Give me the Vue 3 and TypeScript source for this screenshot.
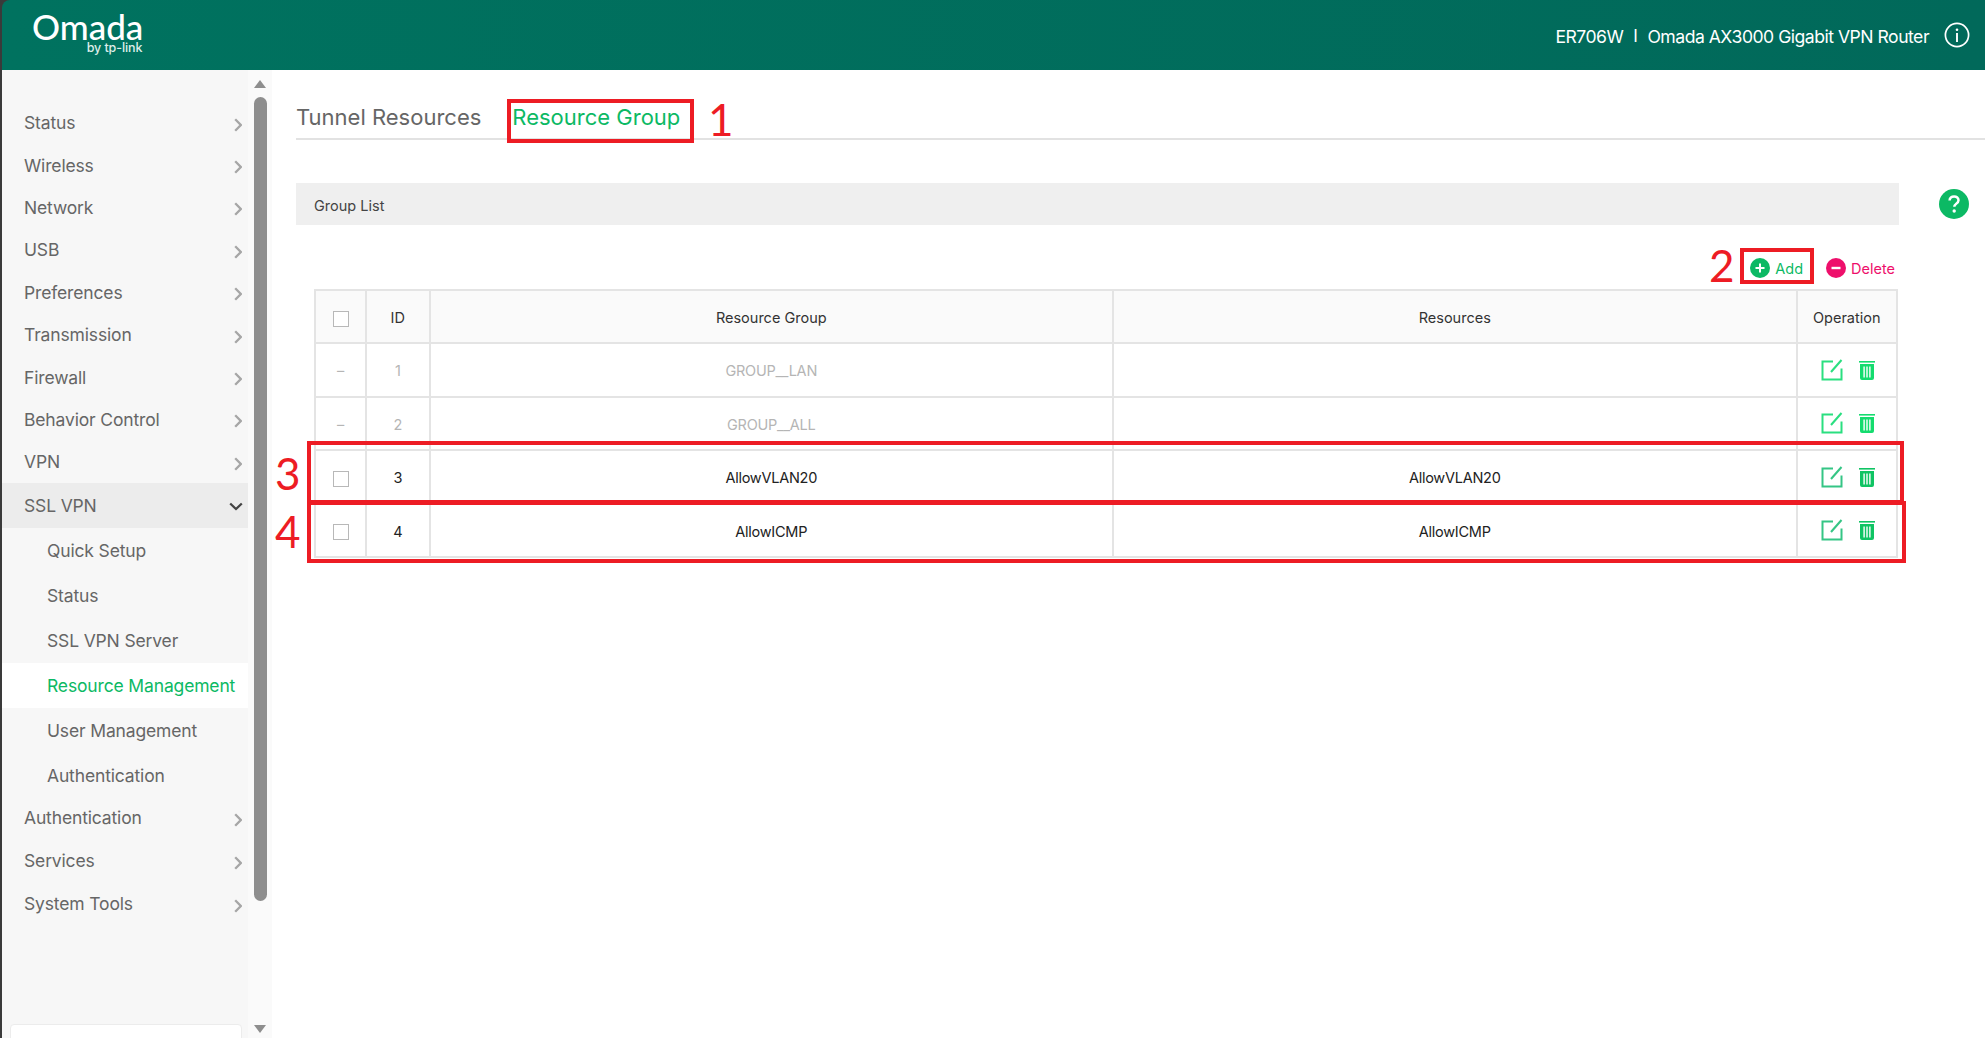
<script setup lang="ts">
interface Row { id: number; group: string; res: string; locked: boolean }
const topItems = ['Status', 'Wireless', 'Network', 'USB', 'Preferences', 'Transmission', 'Firewall', 'Behavior Control', 'VPN']
const subItems = ['Quick Setup', 'Status', 'SSL VPN Server', 'Resource Management', 'User Management', 'Authentication']
const endItems = ['Authentication', 'Services', 'System Tools']
const rows: Row[] = [
  { id: 1, group: 'GROUP__LAN', res: '', locked: true },
  { id: 2, group: 'GROUP__ALL', res: '', locked: true },
  { id: 3, group: 'AllowVLAN20', res: 'AllowVLAN20', locked: false },
  { id: 4, group: 'AllowICMP', res: 'AllowICMP', locked: false },
]
</script>

<template>
  <div class="app">
    <header class="topbar">
      <div class="logo">
        <span class="logo-name">Omada</span>
        <span class="logo-sub">by tp-link</span>
      </div>
      <div class="model">
        <span>ER706W</span><span class="sep">I</span><span>Omada AX3000 Gigabit VPN Router</span>
        <svg class="info" viewBox="0 0 26 26" width="26" height="26">
          <circle cx="13" cy="13" r="11.6" fill="none" stroke="#fff" stroke-width="1.7" />
          <circle cx="13" cy="7.8" r="1.3" fill="#fff" />
          <path d="M13 11v9" stroke="#fff" stroke-width="1.9" fill="none" />
        </svg>
      </div>
    </header>

    <div class="body">
      <aside class="side">
        <div class="menu">
          <div v-for="m in topItems" :key="m" class="item">
            <span>{{ m }}</span>
            <svg class="chev" viewBox="0 0 8 14" width="8" height="14"><path d="M1.2 1.2L6.8 7l-5.6 5.8" fill="none" stroke="#a6a6a6" stroke-width="2.3" /></svg>
          </div>
          <div class="item open">
            <span>SSL VPN</span>
            <svg class="chev-down" viewBox="0 0 14 9" width="14" height="9"><path d="M1.2 1.5L7 7l5.8-5.5" fill="none" stroke="#444" stroke-width="2.3" /></svg>
          </div>
          <div v-for="s in subItems" :key="s" class="sub" :class="{ active: s === 'Resource Management' }">{{ s }}</div>
          <div class="end">
            <div v-for="m in endItems" :key="'e' + m" class="item">
              <span>{{ m }}</span>
              <svg class="chev" viewBox="0 0 8 14" width="8" height="14"><path d="M1.2 1.2L6.8 7l-5.6 5.8" fill="none" stroke="#a6a6a6" stroke-width="2.3" /></svg>
            </div>
          </div>
        </div>
        <div class="side-foot"></div>
      </aside>

      <div class="scroll">
        <span class="tri up"></span>
        <span class="thumb"></span>
        <span class="tri dn"></span>
      </div>

      <main class="main">
        <nav class="tabs">
          <span class="tab">Tunnel Resources</span>
          <span class="tab on">Resource Group</span>
        </nav>

        <div class="bar-row">
          <div class="bar">Group List</div>
          <svg class="help" viewBox="0 0 30 30" width="30" height="30">
            <circle cx="15" cy="15" r="15" fill="#0cb964" />
            <path d="M10.6 11.6c0-2.6 2-4.2 4.5-4.2s4.4 1.5 4.4 3.8c0 3.4-4.2 3.4-4.2 6.6" fill="none" stroke="#fff" stroke-width="2.5" />
            <circle cx="15.2" cy="22" r="1.7" fill="#fff" />
          </svg>
        </div>

        <div class="panel">
          <div class="actions">
            <span class="act add">
              <svg viewBox="0 0 20 20" width="20" height="20"><circle cx="10" cy="10" r="10" fill="#0cb964" /><path d="M10 5.5v9M5.5 10h9" stroke="#fff" stroke-width="2" /></svg>
              <span class="lbl">Add</span>
            </span>
            <span class="act del">
              <svg viewBox="0 0 20 20" width="20" height="20"><circle cx="10" cy="10" r="10" fill="#ee0f6b" /><path d="M5.5 10h9" stroke="#fff" stroke-width="2.4" /></svg>
              <span class="lbl">Delete</span>
            </span>
          </div>

          <table class="grid">
            <colgroup>
              <col class="c1" /><col class="c2" /><col class="c3" /><col class="c3" /><col />
            </colgroup>
            <thead>
              <tr>
                <th><span class="cb"></span></th>
                <th>ID</th>
                <th>Resource Group</th>
                <th>Resources</th>
                <th>Operation</th>
              </tr>
            </thead>
            <tbody>
              <tr v-for="r in rows" :key="r.id" :class="{ locked: r.locked }">
                <td>
                  <span v-if="r.locked">–</span>
                  <span v-else class="cb"></span>
                </td>
                <td>{{ r.id }}</td>
                <td>{{ r.group }}</td>
                <td>{{ r.res }}</td>
                <td>
                  <div class="ops">
                    <svg viewBox="0 0 22 22" width="22" height="22" class="edit">
                      <path d="M12 2.5H1.5v18h19V9.5" fill="none" stroke="currentColor" stroke-width="2" />
                      <path d="M10 13L20.5 1" fill="none" stroke="currentColor" stroke-width="2" />
                    </svg>
                    <svg viewBox="0 0 16 20" width="16" height="20" class="trash">
                      <path d="M0 1h16v1.6H0z" fill="currentColor" />
                      <path fill-rule="evenodd" d="M1 4h14v14a2 2 0 0 1-2 2H3a2 2 0 0 1-2-2zM4.4 6.5v11h1.4v-11zM7.3 6.5v11h1.4v-11zM10.2 6.5v11h1.4v-11z" fill="currentColor" />
                    </svg>
                  </div>
                </td>
              </tr>
            </tbody>
          </table>
        </div>
      </main>
    </div>

    <span class="mark box1"></span>
    <span class="mark box2"></span>
    <span class="mark box3"></span>
    <span class="mark box4"></span>
    <span class="num n1">1</span>
    <span class="num n2">2</span>
    <span class="num n3">3</span>
    <span class="num n4">4</span>
  </div>
</template>

<style>
html, body { margin: 0; padding: 0; background: #fff; }
</style>

<style scoped>
.app {
  position: relative;
  width: 1985px;
  height: 1038px;
  overflow: hidden;
  display: flex;
  flex-direction: column;
  background: #3a3a3a;
  font-family: Inter, "Noto Sans", sans-serif;
  color: #333;
}
.topbar {
  height: 70px;
  flex: none;
  margin-left: 2px;
  border-top-left-radius: 8px;
  background: linear-gradient(90deg, #00725f, #01695a);
  display: flex;
  align-items: center;
  justify-content: space-between;
  color: #fff;
}
.logo { display: flex; flex-direction: column; align-items: flex-end; margin-left: 30px; margin-top: -6px; line-height: 1; }
.logo-name { font-family: Lato, sans-serif; font-size: 35px; font-weight: 500; height: 33px; }
.logo-sub { font-size: 12.5px; font-weight: 500; color: #dfeeea; letter-spacing: -0.1px; margin-right: 1px; }
.model { display: flex; align-items: center; font-size: 17.6px; letter-spacing: -0.5px; margin-right: 15px; padding-top: 2px; }
.sep { margin: 0 10px; font-size: 17px; font-weight: 400; }
.info { margin-left: 15px; margin-top: -2px; }

.body { flex: 1; display: flex; min-height: 0; margin-left: 2px; background: #fff; }
.side { width: 246px; flex: none; background: #f7f7f7; position: relative; }
.menu { padding-top: 31.5px; }
.item {
  height: 42.4px;
  display: flex;
  align-items: center;
  justify-content: space-between;
  padding: 0 6px 0 22px;
  font-size: 17.5px;
  letter-spacing: -0.15px;
  color: #666;
}
.chev { margin-top: 4px; }
.item.open { height: 45px; background: #ececec; padding-right: 5px; }
.chev-down { margin-top: 2px; }
.end { margin-top: -2px; }
.end .item { height: 43px; }
.sub {
  height: 45px;
  display: flex;
  align-items: center;
  padding-left: 45px;
  font-size: 17.5px;
  letter-spacing: -0.15px;
  color: #666;
}
.sub.active { background: #fff; color: #0cb964; }
.side-foot {
  position: absolute;
  left: 8px;
  right: 6px;
  top: 954px;
  height: 40px;
  background: #fff;
  border: 1px solid #ececec;
  border-radius: 4px;
}

.scroll {
  width: 24px;
  flex: none;
  background: #fafafa;
  display: flex;
  flex-direction: column;
  align-items: center;
  padding-top: 10px;
  box-sizing: border-box;
}
.thumb { width: 13px; height: 804px; margin: 9px 0 0; border-radius: 7px; background: #8e8e8e; flex: none; }
.tri { width: 0; height: 0; border-left: 6px solid transparent; border-right: 6px solid transparent; flex: none; }
.tri.up { border-bottom: 8px solid #8e8e8e; }
.tri.dn { border-top: 8px solid #8e8e8e; margin-top: 124px; }

.main { flex: 1; min-width: 0; padding-left: 24px; }
.tabs {
  height: 70px;
  box-sizing: border-box;
  border-bottom: 2px solid #e2e2e2;
  display: flex;
  align-items: flex-end;
  gap: 31px;
  font-size: 22px;
  padding-bottom: 8px;
}
.tab { color: #666; }
.tab.on { color: #0cb964; }

.bar-row { display: flex; align-items: center; margin-top: 43px; gap: 40px; }
.bar {
  width: 1603px;
  height: 42px;
  background: #efefef;
  box-sizing: border-box;
  padding: 2px 0 0 18px;
  display: flex;
  align-items: center;
  font-size: 14.5px;
  color: #444;
}
.help { flex: none; }

.panel { width: 1584px; margin-left: 18px; }
.actions {
  height: 64px;
  display: flex;
  align-items: center;
  justify-content: flex-end;
  gap: 22px;
  font-size: 14.5px;
  padding-top: 21px;
  padding-right: 3px;
  box-sizing: border-box;
}
.act { display: inline-flex; align-items: center; gap: 5px; }
.act.add { color: #0cb964; }
.act.del { color: #ee0f6b; }
.act.add .lbl { margin-right: 1px; }
.lbl { padding-top: 2px; }

.grid { width: 100%; table-layout: fixed; border-collapse: collapse; font-size: 14.5px; }
.c1 { width: 51px; }
.c2 { width: 63.5px; }
.c3 { width: 683.5px; }
.grid th, .grid td { border: 2px solid #e4e4e4; text-align: center; padding: 2px 0 0; height: 49.5px; color: #222; font-weight: 400; }
.grid td { letter-spacing: -0.25px; }
.grid th { background: #fafafa; color: #333; height: 49px; }
.locked td { color: #b5b5b5; }
.cb { display: inline-block; box-sizing: border-box; width: 16px; height: 16px; border: 1.5px solid #b8b8b8; background: #fff; vertical-align: middle; }
.ops { display: flex; align-items: center; justify-content: flex-start; padding-left: 23px; gap: 16px; margin-top: -2px; }
.edit { color: #35c585; }
.trash { color: #0fc463; }
.locked .edit { color: #2adf80; }
.locked .trash { color: #14dc6e; }

.mark { position: absolute; box-sizing: border-box; border: 4px solid #ed1c24; pointer-events: none; }
.box1 { left: 507px; top: 99px; width: 187px; height: 44px; }
.box2 { left: 1740px; top: 248px; width: 74px; height: 36px; }
.box3 { left: 307px; top: 441px; width: 1597px; height: 63px; }
.box4 { left: 307px; top: 501px; width: 1599px; height: 62px; }
.num { position: absolute; color: #ed1c24; font-family: Lato, sans-serif; font-size: 44px; line-height: 1; }
.n1 { left: 708px; top: 97px; }
.n2 { left: 1709px; top: 243px; }
.n3 { left: 275px; top: 451px; }
.n4 { left: 275px; top: 509px; }
</style>
